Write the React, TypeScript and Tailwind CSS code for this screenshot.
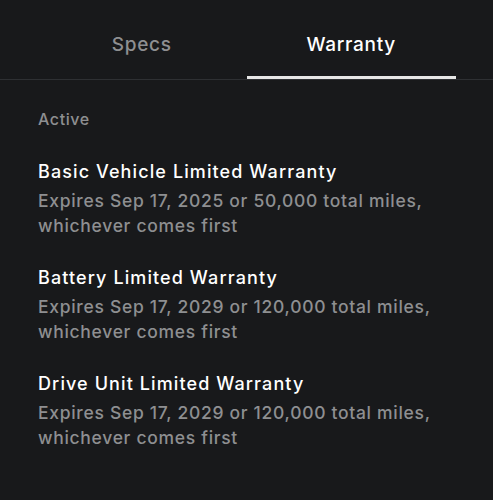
import React from "react";

const warranties = [
  { title: "Basic Vehicle Limited Warranty", detail: "Expires Sep 17, 2025 or 50,000 total miles, whichever comes first" },
  { title: "Battery Limited Warranty", detail: "Expires Sep 17, 2029 or 120,000 total miles, whichever comes first" },
  { title: "Drive Unit Limited Warranty", detail: "Expires Sep 17, 2029 or 120,000 total miles, whichever comes first" },
];

const App: React.FC = () => {
  return (
    <div className="min-h-[500px] w-[493px] bg-[#18191b] font-['Inter',sans-serif] antialiased">
      <div className="flex border-b border-[#2e3033] px-[37px]">
        <button className="flex-1 h-[79px] pt-[12px] text-[19px] tracking-[0.7px] font-medium text-[#8e8f91]">Specs</button>
        <button className="relative flex-1 h-[79px] pt-[12px] text-[19px] tracking-[0.7px] font-medium text-white">
          Warranty
          <span className="absolute left-0 right-0 bottom-0 h-[3px] bg-[#e6e6e6]"></span>
        </button>
      </div>
      <div className="px-[38px] pt-[27px]">
        <div className="text-[16px] font-medium tracking-[0.6px] text-[#8e8f91] leading-[24px]">Active</div>
        <ul className="mt-[28px] flex flex-col gap-[27px]">
          {warranties.map((w, i) => (
            <li key={i}>
              <div className="text-[18px] font-medium tracking-[1.1px] text-white leading-[26px]">{w.title}</div>
              <div className="mt-[3px] text-[17.5px] font-medium tracking-[0.7px] text-[#8e8f91] leading-[25px] max-w-[420px]">{w.detail}</div>
            </li>
          ))}
        </ul>
      </div>
    </div>
  );
};

export default App;
